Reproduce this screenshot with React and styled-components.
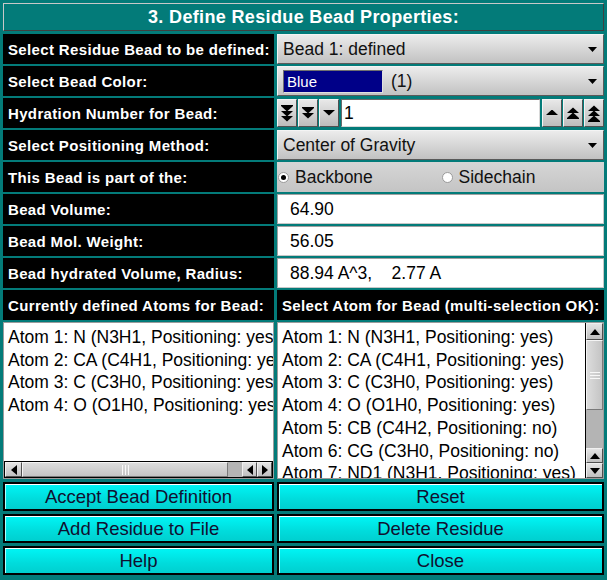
import React from 'react';
import styled, { createGlobalStyle } from 'styled-components';

const TEAL = '#037b79';

const Global = createGlobalStyle`
  html, body { margin: 0; padding: 0; background: ${TEAL}; }
  body { width: 607px; height: 580px; overflow: hidden; font-family: "Liberation Sans", Arial, sans-serif; }
`;

const Window = styled.div`
  width: 607px;
  height: 580px;
  box-sizing: border-box;
  padding: 3px;
  background: ${TEAL};
  display: flex;
  flex-direction: column;
`;

const Title = styled.div`
  height: 28px;
  box-sizing: border-box;
  border: 1px solid;
  border-color: #c8c8c8 #404040 #404040 #c8c8c8;
  display: flex;
  align-items: center;
  justify-content: center;
  color: #fff;
  font-weight: bold;
  font-size: 18px;
  letter-spacing: 0.35px;
`;

const FormGrid = styled.div`
  margin-top: 3px;
  display: grid;
  grid-template-columns: 271px 327px;
  grid-auto-rows: 30px;
  column-gap: 3px;
  row-gap: 2px;
`;

const Label = styled.div`
  background: #000;
  color: #fff;
  font-weight: bold;
  font-size: 15px;
  letter-spacing: 0.35px;
  padding-left: 5px;
  display: flex;
  align-items: center;
  white-space: nowrap;
  overflow: hidden;
`;

const Combo = styled.div`
  box-sizing: border-box;
  border: 1px solid;
  border-color: #f4f4f4 #5a5a5a #5a5a5a #f4f4f4;
  background: linear-gradient(#ececec, #c2c2c2);
  display: flex;
  align-items: center;
  padding: 0 6px 0 5px;
  font-size: 17.5px;
  color: #111;
`;

const ComboText = styled.span`
  flex: 1;
`;

const Swatch = styled.div`
  width: 100px;
  height: 23px;
  box-sizing: border-box;
  border: 1px solid;
  border-color: #707070 #e0e0e0 #e0e0e0 #707070;
  background: #000088;
  color: #fff;
  font-size: 15px;
  display: flex;
  align-items: center;
  padding-left: 3px;
  margin-right: 8px;
`;

const Arrow = ({ dir = 'down', size = 9 }) => {
  const h = Math.round(size * 0.55);
  const pts = {
    down: `0,0 ${size},0 ${size / 2},${h}`,
    up: `0,${h} ${size},${h} ${size / 2},0`,
    left: `${h},0 ${h},${size} 0,${size / 2}`,
    right: `0,0 0,${size} ${h},${size / 2}`,
  }[dir];
  const w = dir === 'left' || dir === 'right' ? h : size;
  const hh = dir === 'left' || dir === 'right' ? size : h;
  return (
    <svg width={w} height={hh} viewBox={`0 0 ${w} ${hh}`}>
      <polygon points={pts} fill="#000" />
    </svg>
  );
};

const StackArrow = ({ dir, count }) => {
  const w = 12;
  const th = 5;
  const total = count === 1 ? th : count * th + 1;
  const polys = [];
  for (let i = 0; i < count; i++) {
    const y = i * th + (count > 1 ? 1 : 0);
    if (dir === 'down') {
      polys.push(`0,${y} ${w},${y} ${w / 2},${y + th + 0.5}`);
    } else {
      polys.push(`0,${y + th} ${w},${y + th} ${w / 2},${y - 0.5}`);
    }
  }
  return (
    <svg width={w} height={total + 1} viewBox={`0 0 ${w} ${total + 1}`}>
      {polys.map((p, i) => (
        <polygon key={i} points={p} fill="#000" />
      ))}
      {count > 1 && dir === 'down' && <rect x="0" y="0" width={w} height="1" fill="#000" />}
      {count > 1 && dir === 'up' && <rect x="0" y={total} width={w} height="1" fill="#000" />}
    </svg>
  );
};

const SpinRow = styled.div`
  display: flex;
  gap: 1px;
  align-items: stretch;
  padding: 1px 0 1px 0;
`;

const SpinButton = styled.div`
  width: 20px;
  box-sizing: border-box;
  border: 1px solid;
  border-color: #f4f4f4 #505050 #505050 #f4f4f4;
  background: linear-gradient(#e8e8e8, #bcbcbc);
  display: flex;
  align-items: center;
  justify-content: center;
`;

const TextInput = styled.div`
  flex: 1;
  margin: 0 1px;
  box-sizing: border-box;
  background: #fff;
  border: 1px solid;
  border-color: #6a6a6a #d8d8d8 #d8d8d8 #6a6a6a;
  font-size: 17.5px;
  display: flex;
  align-items: center;
  padding-left: 2px;
  color: #000;
`;

const RadioRow = styled.div`
  background: linear-gradient(#d6d6d6, #c4c4c4);
  display: grid;
  grid-template-columns: 1fr 1fr;
  align-items: center;
  font-size: 17.5px;
  color: #111;
`;

const RadioOption = styled.label`
  display: flex;
  align-items: center;
  gap: 6px;
  padding-left: 1px;
`;

const RadioDot = styled.span`
  width: 11px;
  height: 11px;
  box-sizing: border-box;
  border-radius: 50%;
  background: #fff;
  border: 1px solid #9a9a9a;
  display: flex;
  align-items: center;
  justify-content: center;
  &::after {
    content: '';
    width: 5px;
    height: 5px;
    border-radius: 50%;
    background: ${(p) => (p.$on ? '#000' : 'transparent')};
  }
`;

const ValueField = styled.div`
  box-sizing: border-box;
  background: #fff;
  border: 1px solid;
  border-color: #a0a0a0 #c8c8c8 #c8c8c8 #a0a0a0;
  display: flex;
  align-items: center;
  padding-left: 12px;
  font-size: 17.5px;
  color: #000;
  white-space: pre;
`;

const ListsRow = styled.div`
  margin-top: 2px;
  height: 157px;
  display: grid;
  grid-template-columns: 271px 327px;
  column-gap: 3px;
`;

const ListBox = styled.div`
  box-sizing: border-box;
  background: #fff;
  border: 1px solid #9c9c9c;
  display: flex;
  flex-direction: ${(p) => (p.$vertical ? 'row' : 'column')};
  overflow: hidden;
`;

const Items = styled.div`
  flex: 1;
  overflow: hidden;
  padding: 3px 0 0 4px;
  font-size: 17.5px;
  line-height: 22.7px;
  color: #000;
  white-space: nowrap;
`;

const HScroll = styled.div`
  height: 15px;
  flex: 0 0 15px;
  display: flex;
  border: 1px solid #000;
  background: #a8a8a8;
`;

const VScroll = styled.div`
  width: 17px;
  flex: 0 0 17px;
  display: flex;
  flex-direction: column;
  border-left: 1px solid #000;
  background: #a8a8a8;
`;

const ScrollBtn = styled.div`
  flex: 0 0 ${(p) => p.$size || 16}px;
  box-sizing: border-box;
  border: 1px solid;
  border-color: #f0f0f0 #505050 #505050 #f0f0f0;
  background: linear-gradient(#e4e4e4, #c0c0c0);
  display: flex;
  align-items: center;
  justify-content: center;
`;

const Thumb = styled.div`
  flex: 0 0 ${(p) => p.$size}px;
  box-sizing: border-box;
  border: 1px solid;
  border-color: #f4f4f4 #7a7a7a #7a7a7a #f4f4f4;
  background: ${(p) => (p.$vertical ? 'linear-gradient(90deg, #dcdcdc, #c4c4c4)' : 'linear-gradient(#dcdcdc, #c4c4c4)')};
  display: flex;
  align-items: center;
  justify-content: center;
`;

const Track = styled.div`
  flex: 1;
  background: #b4b4b4;
`;

const Grip = ({ vertical }) =>
  vertical ? (
    <svg width="10" height="7" viewBox="0 0 10 7">
      <rect x="0" y="0" width="10" height="1" fill="#f8f8f8" />
      <rect x="0" y="3" width="10" height="1" fill="#f8f8f8" />
      <rect x="0" y="6" width="10" height="1" fill="#f8f8f8" />
    </svg>
  ) : (
    <svg width="7" height="10" viewBox="0 0 7 10">
      <rect x="0" y="0" width="1" height="10" fill="#f8f8f8" />
      <rect x="3" y="0" width="1" height="10" fill="#f8f8f8" />
      <rect x="6" y="0" width="1" height="10" fill="#f8f8f8" />
    </svg>
  );

const ButtonGrid = styled.div`
  margin-top: 3px;
  display: grid;
  grid-template-columns: 271px 327px;
  grid-auto-rows: 29px;
  column-gap: 3px;
  row-gap: 3px;
`;

const ActionButton = styled.button`
  box-sizing: border-box;
  margin: 0;
  border: 2px solid #000;
  box-shadow: inset 0 1px 0 #ffffff, inset 1px 0 0 #a8ffff;
  background: linear-gradient(#00f6f6, #00dcdc 60%, #00cfcf);
  font-family: "Liberation Sans", Arial, sans-serif;
  font-size: 18.5px;
  color: #101030;
  padding: 0;
  cursor: pointer;
`;

const leftAtoms = [
  'Atom 1: N (N3H1, Positioning: yes)',
  'Atom 2: CA (C4H1, Positioning: yes)',
  'Atom 3: C (C3H0, Positioning: yes)',
  'Atom 4: O (O1H0, Positioning: yes)',
];

const rightAtoms = [
  'Atom 1: N (N3H1, Positioning: yes)',
  'Atom 2: CA (C4H1, Positioning: yes)',
  'Atom 3: C (C3H0, Positioning: yes)',
  'Atom 4: O (O1H0, Positioning: yes)',
  'Atom 5: CB (C4H2, Positioning: no)',
  'Atom 6: CG (C3H0, Positioning: no)',
  'Atom 7: ND1 (N3H1, Positioning: yes)',
];

export default function App() {
  return (
    <>
      <Global />
      <Window>
        <Title>3. Define Residue Bead Properties:</Title>
        <FormGrid>
          <Label>Select Residue Bead to be defined:</Label>
          <Combo>
            <ComboText>Bead 1: defined</ComboText>
            <Arrow dir="down" />
          </Combo>

          <Label>Select Bead Color:</Label>
          <Combo>
            <Swatch>Blue</Swatch>
            <ComboText>(1)</ComboText>
            <Arrow dir="down" />
          </Combo>

          <Label>Hydration Number for Bead:</Label>
          <SpinRow>
            <SpinButton><StackArrow dir="down" count={3} /></SpinButton>
            <SpinButton><StackArrow dir="down" count={2} /></SpinButton>
            <SpinButton><StackArrow dir="down" count={1} /></SpinButton>
            <TextInput>1</TextInput>
            <SpinButton><StackArrow dir="up" count={1} /></SpinButton>
            <SpinButton><StackArrow dir="up" count={2} /></SpinButton>
            <SpinButton><StackArrow dir="up" count={3} /></SpinButton>
          </SpinRow>

          <Label>Select Positioning Method:</Label>
          <Combo>
            <ComboText>Center of Gravity</ComboText>
            <Arrow dir="down" />
          </Combo>

          <Label>This Bead is part of the:</Label>
          <RadioRow>
            <RadioOption><RadioDot $on />Backbone</RadioOption>
            <RadioOption><RadioDot />Sidechain</RadioOption>
          </RadioRow>

          <Label>Bead Volume:</Label>
          <ValueField>64.90</ValueField>

          <Label>Bead Mol. Weight:</Label>
          <ValueField>56.05</ValueField>

          <Label>Bead hydrated Volume, Radius:</Label>
          <ValueField>{'88.94 A^3,    2.77 A'}</ValueField>

          <Label>Currently defined Atoms for Bead:</Label>
          <Label>Select Atom for Bead (multi-selection OK):</Label>
        </FormGrid>

        <ListsRow>
          <ListBox>
            <Items>
              {leftAtoms.map((a) => (
                <div key={a}>{a}</div>
              ))}
            </Items>
            <HScroll>
              <ScrollBtn $size={17}><Arrow dir="left" size={10} /></ScrollBtn>
              <Thumb $size={206}><Grip /></Thumb>
              <Track />
              <ScrollBtn $size={15}><Arrow dir="left" size={10} /></ScrollBtn>
              <ScrollBtn $size={15}><Arrow dir="right" size={10} /></ScrollBtn>
            </HScroll>
          </ListBox>
          <ListBox $vertical>
            <Items>
              {rightAtoms.map((a) => (
                <div key={a}>{a}</div>
              ))}
            </Items>
            <VScroll>
              <ScrollBtn $size={17}><Arrow dir="up" size={10} /></ScrollBtn>
              <Thumb $size={70} $vertical><Grip vertical /></Thumb>
              <Track />
              <ScrollBtn $size={15}><Arrow dir="up" size={10} /></ScrollBtn>
              <ScrollBtn $size={15}><Arrow dir="down" size={10} /></ScrollBtn>
            </VScroll>
          </ListBox>
        </ListsRow>

        <ButtonGrid>
          <ActionButton>Accept Bead Definition</ActionButton>
          <ActionButton>Reset</ActionButton>
          <ActionButton>Add Residue to File</ActionButton>
          <ActionButton>Delete Residue</ActionButton>
          <ActionButton>Help</ActionButton>
          <ActionButton>Close</ActionButton>
        </ButtonGrid>
      </Window>
    </>
  );
}
